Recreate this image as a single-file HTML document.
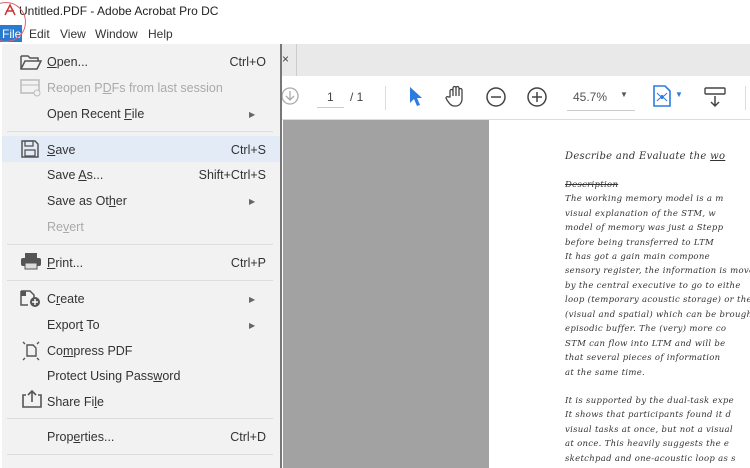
<!DOCTYPE html><html><head><style>
body{margin:0;width:750px;height:468px;overflow:hidden;background:#fff;font-family:"Liberation Sans",sans-serif;position:relative}
.a{position:absolute}
.title{top:0;left:0;width:750px;height:22px;background:#fff;font-size:12px;color:#222}
.menubar{top:22px;left:0;width:750px;height:22px;background:#fff;font-size:12px;color:#333}
.menubar span{position:absolute;top:5px}
.tabs{top:44px;left:270px;width:480px;height:32px;background:#e9e9e9}
.tb{top:76px;left:270px;width:480px;height:43px;background:#fff;border-bottom:1px solid #ddd}
.gray{top:120px;left:283px;width:206px;height:348px;background:#a2a2a2}
.page{top:120px;left:489px;width:261px;height:348px;background:#fff}
.menu{top:44px;left:2px;width:278px;height:424px;background:#f2f2f2;border-right:2px solid #777;font-size:12.5px;color:#333}
.it{position:absolute;left:45px}
.sc{position:absolute;right:14px}
.ar{position:absolute;left:247px;font-size:8px;color:#666}
.sep{position:absolute;left:5px;width:266px;height:1px;background:#ddd}
.hw{position:absolute;left:565px;font-family:"DejaVu Serif",serif;font-style:italic;font-size:8.5px;color:#333;white-space:nowrap;letter-spacing:.3px}
</style></head><body>
<div class="a title"><span class="a" style="left:19px;top:4px">Untitled.PDF - Adobe Acrobat Pro DC</span>
<svg class="a" style="left:3px;top:3px" width="14" height="14"><path d="M2 12 L7 2 L12 12 M3 8 H11" stroke="#c33" fill="none" stroke-width="1.5"/></svg></div>
<div class="a menubar"><div class="a" style="left:0;top:3px;width:22px;height:17px;background:#2a7ad0"></div>
<span style="left:2px;color:#fff">File</span><span style="left:29px">Edit</span><span style="left:60px">View</span><span style="left:95px">Window</span><span style="left:148px">Help</span></div>
<div class="a" style="left:-14px;top:2px;width:38px;height:38px;border:1px solid #e06070;border-radius:50%"></div>
<div class="a tabs"><span class="a" style="left:12px;top:8px;font-size:12px;color:#444">×</span><div class="a" style="left:26px;top:0;width:1px;height:32px;background:#ccc"></div></div>
<div class="a tb">
<svg class="a" style="left:10px;top:10px" width="20" height="20"><circle cx="10" cy="10" r="8" stroke="#aaa" fill="none" stroke-width="1.3"/><path d="M10 5v9M6 10l4 4 4-4" stroke="#aaa" fill="none" stroke-width="1.3"/></svg>
<span class="a" style="left:57px;top:14px;font-size:12px;color:#444">1</span><div class="a" style="left:47px;top:31px;width:27px;height:1px;background:#ccc"></div>
<span class="a" style="left:80px;top:14px;font-size:12px;color:#444">/ 1</span>
<div class="a" style="left:115px;top:10px;width:1px;height:24px;background:#ddd"></div>
<svg class="a" style="left:138px;top:10px" width="16" height="22"><path d="M2 1 L2 17 L6 13 L9 20 L12 19 L9 12 L14 12 Z" fill="#2c7be0"/></svg>
<svg class="a" style="left:175px;top:8px" width="22" height="24"><path d="M5 13V7a1.5 1.5 0 013 0v5V4a1.5 1.5 0 013 0v8V4a1.5 1.5 0 013 0v8V6a1.5 1.5 0 013 0v9c0 4-3 7-6 7h-2c-3 0-5-3-7-6l-1-2a1.5 1.5 0 012.5-1z" stroke="#444" fill="none" stroke-width="1.3"/></svg>
<svg class="a" style="left:215px;top:10px" width="22" height="22"><circle cx="11" cy="11" r="9" stroke="#444" fill="none" stroke-width="1.5"/><path d="M6 11h10" stroke="#444" stroke-width="1.5"/></svg>
<svg class="a" style="left:256px;top:10px" width="22" height="22"><circle cx="11" cy="11" r="9" stroke="#444" fill="none" stroke-width="1.5"/><path d="M6 11h10M11 6v10" stroke="#444" stroke-width="1.5"/></svg>
<span class="a" style="left:303px;top:14px;font-size:12px;color:#555">45.7%</span><span class="a" style="left:350px;top:14px;font-size:8px;color:#555">▼</span>
<div class="a" style="left:297px;top:34px;width:68px;height:1px;background:#ccc"></div>
<svg class="a" style="left:383px;top:9px" width="18" height="22"><path d="M1 1h11l5 5v15H1z" stroke="#2c7be0" fill="none" stroke-width="1.6"/><circle cx="9" cy="12" r="2" fill="#2c7be0"/><path d="M4 8l3 3M14 8l-3 3M4 16l3-3M14 16l-3-3" stroke="#2c7be0"/></svg>
<span class="a" style="left:405px;top:14px;font-size:8px;color:#2c7be0">▼</span>
<svg class="a" style="left:434px;top:10px" width="22" height="22"><rect x="1" y="2" width="20" height="6" rx="1" stroke="#444" fill="none" stroke-width="1.4"/><path d="M11 10v10M7 16l4 4 4-4" stroke="#444" fill="none" stroke-width="1.5"/></svg>
<div class="a" style="left:475px;top:10px;width:1px;height:24px;background:#ddd"></div>
</div>
<div class="a gray"></div>
<div class="a page">
</div>
<div class="hw" style="top:151px;font-size:10px">Describe and Evaluate the <u>wo</u></div>
<div class="hw" style="top:180px"><s>Description</s></div>
<div class="hw" style="top:194px">The working memory model is a m</div>
<div class="hw" style="top:209px">visual explanation of the STM, w</div>
<div class="hw" style="top:223px">model of memory was just a Stepp</div>
<div class="hw" style="top:238px">before being transferred to LTM</div>
<div class="hw" style="top:252px">It has got a gain main compone</div>
<div class="hw" style="top:266px">sensory register, the information is move</div>
<div class="hw" style="top:281px">by the central executive to go to eithe</div>
<div class="hw" style="top:295px">loop (temporary acoustic storage) or the vi</div>
<div class="hw" style="top:310px">(visual and spatial) which can be brought</div>
<div class="hw" style="top:324px">episodic buffer. The (very) more co</div>
<div class="hw" style="top:339px">STM can flow into LTM and will be</div>
<div class="hw" style="top:353px">that several pieces of information</div>
<div class="hw" style="top:368px">at the same time.</div>
<div class="hw" style="top:396px">It is supported by the dual-task expe</div>
<div class="hw" style="top:410px">It shows that participants found it d</div>
<div class="hw" style="top:425px">visual tasks at once, but not a visual</div>
<div class="hw" style="top:439px">at once. This heavily suggests the e</div>
<div class="hw" style="top:454px">sketchpad and one-acoustic loop as s</div>
<div class="a menu">
<div class="a" style="left:0;top:92px;width:278px;height:26px;background:#e3ecf6"></div>
<svg class="a" style="left:17px;top:9px" width="24" height="18"><path d="M2 3h7l2 2h8v3M2 3v13h16l4-8H6l-4 8" stroke="#555" fill="none" stroke-width="1.5"/></svg>
<span class="it" style="top:11px"><u>O</u>pen...</span><span class="sc" style="top:11px">Ctrl+O</span>
<svg class="a" style="left:18px;top:35px" width="22" height="18"><rect x="1" y="1" width="18" height="13" stroke="#bbb" fill="none" stroke-width="1.5"/><path d="M1 6h18" stroke="#bbb"/><circle cx="17" cy="14" r="3" stroke="#bbb" fill="#f2f2f2"/></svg>
<span class="it" style="top:37px;color:#aaa">Reopen P<u>D</u>Fs from last session</span>
<span class="it" style="top:63px">Open Recent <u>F</u>ile</span><span class="ar" style="top:66px">▶</span>
<div class="sep" style="top:87px"></div>
<svg class="a" style="left:19px;top:96px" width="18" height="18"><path d="M1 1h13l3 3v13H1z" stroke="#555" fill="none" stroke-width="1.5"/><rect x="4" y="1" width="8" height="5" stroke="#555" fill="none" stroke-width="1.3"/><rect x="4" y="10" width="10" height="6" stroke="#555" fill="none" stroke-width="1.3"/></svg>
<span class="it" style="top:99px"><u>S</u>ave</span><span class="sc" style="top:99px">Ctrl+S</span>
<span class="it" style="top:124px">Save <u>A</u>s...</span><span class="sc" style="top:124px">Shift+Ctrl+S</span>
<span class="it" style="top:150px">Save as Ot<u>h</u>er</span><span class="ar" style="top:153px">▶</span>
<span class="it" style="top:176px;color:#aaa">Re<u>v</u>ert</span>
<div class="sep" style="top:200px"></div>
<svg class="a" style="left:18px;top:208px" width="22" height="18"><rect x="5" y="1" width="12" height="5" fill="#555"/><rect x="1" y="6" width="20" height="8" rx="2" fill="#555"/><rect x="5" y="11" width="12" height="6" fill="#ddd" stroke="#555"/></svg>
<span class="it" style="top:212px"><u>P</u>rint...</span><span class="sc" style="top:212px">Ctrl+P</span>
<div class="sep" style="top:236px"></div>
<svg class="a" style="left:18px;top:244px" width="22" height="20"><path d="M1 3h9l4 4v3M1 3v14h7" stroke="#555" fill="none" stroke-width="1.5"/><rect x="1" y="3" width="5" height="5" fill="#555"/><circle cx="15" cy="14" r="5" fill="#555"/><path d="M15 11v6M12 14h6" stroke="#fff" stroke-width="1.5"/></svg>
<span class="it" style="top:248px">C<u>r</u>eate</span><span class="ar" style="top:251px">▶</span>
<span class="it" style="top:274px">Expor<u>t</u> To</span><span class="ar" style="top:277px">▶</span>
<svg class="a" style="left:19px;top:296px" width="20" height="22"><path d="M6 5h6l3 3v8H6z" stroke="#555" fill="none" stroke-width="1.4"/><path d="M2 2l2 2M18 2l-2 2M2 20l2-2M18 20l-2-2" stroke="#555" stroke-width="1.4"/></svg>
<span class="it" style="top:300px">Co<u>m</u>press PDF</span>
<span class="it" style="top:325px">Protect Using Pass<u>w</u>ord</span>
<svg class="a" style="left:19px;top:345px" width="22" height="20"><path d="M5 6H2v12h18V6h-3M11 2v11M7 6l4-4 4 4" stroke="#555" fill="none" stroke-width="1.6"/></svg>
<span class="it" style="top:351px">Share Fi<u>l</u>e</span>
<div class="sep" style="top:374px"></div>
<span class="it" style="top:386px">Prop<u>e</u>rties...</span><span class="sc" style="top:386px">Ctrl+D</span>
<div class="sep" style="top:410px"></div>
</div>
</body></html>
